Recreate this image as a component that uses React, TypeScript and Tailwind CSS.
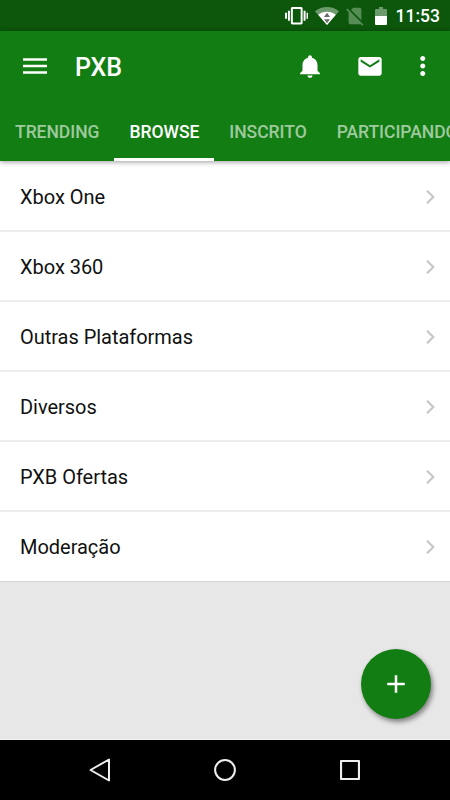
import type { ReactNode } from "react";

const TABS = ["TRENDING", "BROWSE", "INSCRITO", "PARTICIPANDO"];

const FORUMS = [
  "Xbox One",
  "Xbox 360",
  "Outras Plataformas",
  "Diversos",
  "PXB Ofertas",
  "Moderação",
];

function Icon({ children, className }: { children: ReactNode; className: string }) {
  return (
    <svg viewBox="0 0 24 24" fill="currentColor" className={className}>
      {children}
    </svg>
  );
}

function StatusBar() {
  return (
    <div className="flex h-[31px] shrink-0 items-center bg-[#0c570c] pl-[284.5px] text-white">
      <Icon className="h-[23.5px] w-[23.5px] shrink-0">
        <path d="M0 15h2V9H0v6zm3 2h2V7H3v10zm19-8v6h2V9h-2zm-3 8h2V7h-2v10zM16.5 3h-9C6.67 3 6 3.67 6 4.5v15c0 .83.67 1.5 1.5 1.5h9c.83 0 1.5-.67 1.5-1.5v-15c0-.83-.67-1.5-1.5-1.5zM16 19H8V5h8v14z" />
      </Icon>
      <svg viewBox="0 0 24 18" className="ml-[7px] h-[18px] w-[24px] shrink-0">
        <path d="M0 4.2C3.3 1.5 7.5 0 12 0s8.7 1.5 12 4.2L12 18z" fill="#fff" fillOpacity="0.4" />
        <path d="M3.2 7.8C5.6 5.8 8.6 4.8 12 4.8s6.4 1 8.8 3L12 18z" fill="#fff" />
        <path d="M12 5.8l3 4.2H9zM9 12.3h6L12 16.3z" fill="#6b6b6b" />
      </svg>
      <Icon className="ml-[5px] h-[22px] w-[22px] shrink-0 text-[#558d55]">
        <path d="M18.99 5c0-1.1-.89-2-1.99-2h-7L7.66 5.34 19 16.68 18.99 5zM3.65 3.88L2.38 5.15 5 7.77V19c0 1.1.9 2 2 2h10.01c.35 0 .67-.1.96-.26l1.88 1.88 1.27-1.27L3.65 3.88z" />
      </Icon>
      <svg viewBox="0 0 12 18" className="ml-[8.5px] h-[18px] w-[12px] shrink-0">
        <path d="M1 2h3V0h4v2h3q1 0 1 1v6H0V3q0-1 1-1z" fill="#fff" fillOpacity="0.4" />
        <path d="M0 9h12v8q0 1-1 1H1q-1 0-1-1z" fill="#fff" />
      </svg>
      <span className="ml-[9px] pt-[2px] text-[17.5px] leading-none font-medium">11:53</span>
    </div>
  );
}

function Toolbar() {
  return (
    <div className="flex h-[70px] items-center pl-5 text-white">
      <Icon className="h-[30px] w-[30px]">
        <path d="M2.4 5.7h19.2v2H2.4zm0 5.3h19.2v2H2.4zm0 5.2h19.2v2H2.4z" />
      </Icon>
      <h1 className="ml-[25px] flex-1 pt-[2px] text-[25px] leading-none font-medium">PXB</h1>
      <Icon className="h-[30px] w-[30px]">
        <path
          transform="translate(0 1) scale(1 .93)"
          d="M12 22c1.1 0 2-.9 2-2h-4c0 1.1.89 2 2 2zm6-6v-5c0-3.07-1.64-5.64-4.5-6.32V4c0-.83-.67-1.5-1.5-1.5s-1.5.67-1.5 1.5v.68C7.63 5.36 6 7.92 6 11v5l-2 2v1h16v-1l-2-2z"
        />
      </Icon>
      <Icon className="mr-px ml-[31px] h-[28px] w-[28px]">
        <path d="M20 4.3H4c-1.1 0-1.99.9-1.99 2L2 18.3c0 1.1.9 2 2 2h16c1.1 0 2-.9 2-2v-12c0-1.1-.9-2-2-2zm0 4l-8 5-8-5v-2l8 5 8-5v2z" />
      </Icon>
      <Icon className="mr-[12.5px] ml-[22.5px] h-[30px] w-[30px]">
        <path d="M11.8 8c1.1 0 2-.9 2-2s-.9-2-2-2-2 .9-2 2 .9 2 2 2zm0 2c-1.1 0-2 .9-2 2s.9 2 2 2 2-.9 2-2-.9-2-2-2zm0 6c-1.1 0-2 .9-2 2s.9 2 2 2 2-.9 2-2-.9-2-2-2z" />
      </Icon>
    </div>
  );
}

function Tabs({ active }: { active: string }) {
  return (
    <div className="flex h-[60px] overflow-hidden">
      {TABS.map((tab) => (
        <div
          key={tab}
          className={
            tab === active
              ? "flex shrink-0 items-center border-b-[3px] border-white px-[15px] pt-[5px] text-[17.5px] tracking-[-0.03px] font-medium text-white"
              : "flex shrink-0 items-center px-[15px] pt-[2px] text-[17.5px] tracking-[-0.03px] font-medium text-white/60"
          }
        >
          {tab}
        </div>
      ))}
    </div>
  );
}

function ForumList() {
  return (
    <ul className="shrink-0 bg-white">
      {FORUMS.map((name) => (
        <li
          key={name}
          className="flex h-[70px] items-center justify-between border-b-2 border-[#ececec] pt-[2px] pr-[15px] pl-5 text-[20px] tracking-[-0.03px] text-[#111] first:h-[71px] first:pt-[3px] last:border-b last:pt-px last:border-[#d4d4d4]"
        >
          {name}
          <svg viewBox="0 0 9 14" fill="none" className="mb-px h-[14px] w-[9px]">
            <path d="M1 .8L7.3 7 1 13.2" stroke="#c7c7c7" strokeWidth="2.2" />
          </svg>
        </li>
      ))}
    </ul>
  );
}

function NavBar() {
  return (
    <div className="flex h-[60px] shrink-0 items-center justify-between bg-black pr-[90px] pl-[89px] text-[#eee]">
      <svg viewBox="0 0 21 24" fill="none" className="h-6 w-[21px]">
        <path d="M20 1.5v21L1.5 12z" stroke="currentColor" strokeWidth="2" strokeLinejoin="round" />
      </svg>
      <svg viewBox="0 0 22 22" fill="none" className="h-[22px] w-[22px]">
        <circle cx="11" cy="11" r="9.9" stroke="currentColor" strokeWidth="2" />
      </svg>
      <svg viewBox="0 0 20 20" fill="none" className="h-5 w-5">
        <rect x="1" y="1" width="18" height="18" rx="0.5" stroke="currentColor" strokeWidth="2.2" />
      </svg>
    </div>
  );
}

export default function App() {
  return (
    <div className="relative flex h-[800px] w-[450px] flex-col overflow-hidden bg-[#e7e7e7] font-[Roboto,sans-serif]">
      <StatusBar />
      <header className="z-10 shrink-0 bg-[#127d12] shadow-[0_1px_5px_rgba(0,0,0,0.4)]">
        <Toolbar />
        <Tabs active="BROWSE" />
      </header>
      <ForumList />
      <div className="flex-1 border-b border-[#f3f3f3]" />
      <NavBar />
      <button
        type="button"
        aria-label="Novo tópico"
        className="absolute right-[19px] bottom-[81px] flex h-[70px] w-[70px] items-center justify-center rounded-full bg-[#127d12] text-white shadow-[2px_3px_5px_rgba(0,0,0,0.45)]"
      >
        <Icon className="h-[30px] w-[30px]">
          <path d="M19 13h-6v6h-2v-6H5v-2h6V5h2v6h6v2z" />
        </Icon>
      </button>
    </div>
  );
}
